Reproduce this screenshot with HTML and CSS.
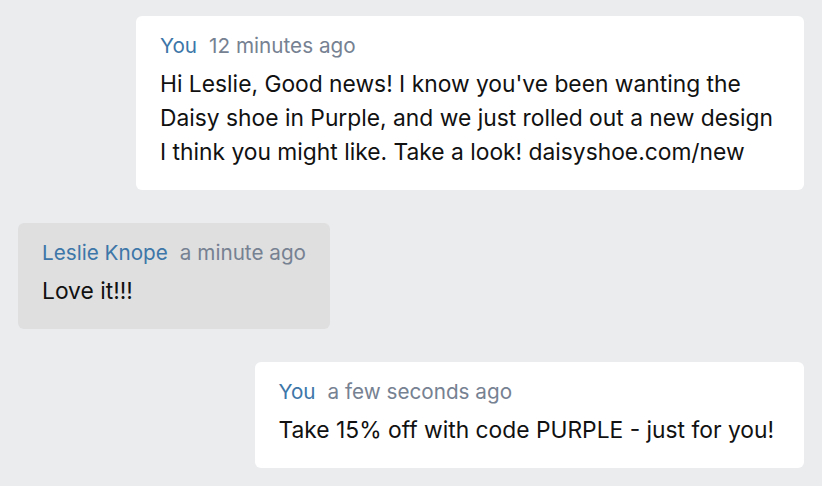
FILE: index.html
```html
<!DOCTYPE html>
<html>
<head>
<meta charset="utf-8">
<link rel="stylesheet" href="styles.css">
</head>
<body>
<div class="thread">
  <div class="msg msg-out">
    <div class="meta"><span class="name">You</span><span class="time">12 minutes ago</span></div>
    <div class="text">Hi Leslie, Good news! I know you've been wanting the Daisy shoe in Purple, and we just rolled out a new design I think you might like. Take a look! daisyshoe.com/new</div>
  </div>
  <div class="msg msg-in">
    <div class="meta"><span class="name">Leslie Knope</span><span class="time">a minute ago</span></div>
    <div class="text">Love it!!!</div>
  </div>
  <div class="msg msg-out">
    <div class="meta"><span class="name">You</span><span class="time">a few seconds ago</span></div>
    <div class="text">Take 15% off with code PURPLE - just for you!</div>
  </div>
</div>
</body>
</html>
```
FILE: styles.css
```css
html, body {
  margin: 0;
  padding: 0;
  background: #ebecee;
}
body {
  font-family: Inter, "Noto Sans", sans-serif;
  color: #111;
}
.thread {
  display: flex;
  flex-direction: column;
  gap: 33px;
  padding: 16px 18px;
}
.msg {
  box-sizing: border-box;
  width: fit-content;
  max-width: 668px;
  padding: 16px 24px 21px;
  border-radius: 6px;
}
.msg-out {
  align-self: flex-end;
  background: #ffffff;
  padding-right: 30px;
}
.msg-in {
  align-self: flex-start;
  background: #dfdfdf;
}
.meta {
  display: flex;
  gap: 12px;
  font-size: 20.7px;
  line-height: 28px;
  margin-bottom: 7px;
}
.name {
  color: #3d76a8;
}
.time {
  color: #768192;
}
.text {
  font-size: 22.8px;
  line-height: 34px;
}
```
